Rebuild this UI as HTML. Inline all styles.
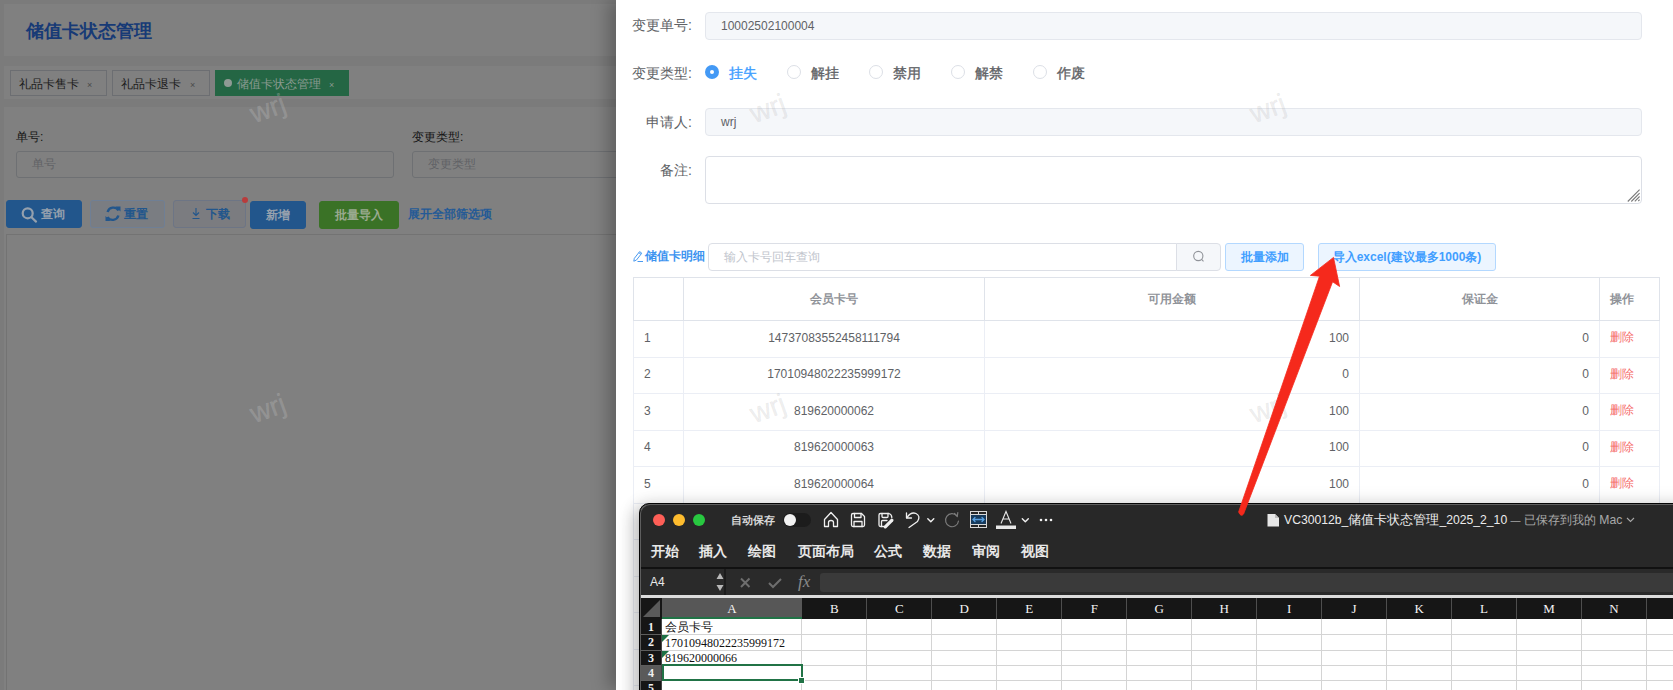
<!DOCTYPE html>
<html><head><meta charset="utf-8">
<style>
*{box-sizing:border-box;margin:0;padding:0}
html,body{width:1673px;height:690px;overflow:hidden}
body{position:relative;font-family:"Liberation Sans",sans-serif;background:#7b7b7b;color:#606266}
.abs{position:absolute}
/* left page */
#hdr{left:4px;top:4px;width:1200px;height:52px;background:#808080}
#hdr .t{left:22px;top:17px;font-size:18px;font-weight:bold;color:#173a76;white-space:nowrap;line-height:20px}
#tabbar{left:4px;top:66px;width:1200px;height:33px;background:#808080}
.tab{top:70px;height:26px;border:1px solid #6c6e72;background:#808080;font-size:12px;color:#1c1c1c;line-height:26px;padding-left:8px;white-space:nowrap}
.tab .x{position:absolute;top:1px;font-size:9px;color:#4a4a4a}
#content{left:4px;top:107px;width:1200px;height:600px;background:#808080}
.lbl{font-size:12px;color:#141414;white-space:nowrap;line-height:14px}
.inp{height:27px;border:1px solid #6e7073;border-radius:3px;background:#808080;font-size:12px;color:#606266;line-height:25px;padding-left:15px;white-space:nowrap}
.btn{height:28px;border-radius:3px;font-size:12px;font-weight:bold;line-height:26px;text-align:center;white-space:nowrap;border:1px solid}
#card{left:6px;top:234px;width:1200px;height:500px;border:1px solid #737373;background:#808080}
#overlay{left:0;top:0;width:1673px;height:690px;background:rgba(0,0,0,.5)}
/* drawer */
#drawer{left:616px;top:0;width:1057px;height:690px;background:#fff;box-shadow:-8px 0 16px rgba(0,0,0,.25)}
.dl{font-size:14px;color:#606266;text-align:right;white-space:nowrap;line-height:16px}
.dinp{height:28px;border:1px solid #e4e7ed;border-radius:4px;background:#f5f7fa;font-size:12px;color:#606266;line-height:26px;padding-left:15px}
.radio{width:14px;height:14px;border-radius:50%;border:1px solid #dcdfe6;background:#fff}
.rt{font-size:14px;color:#606266;font-weight:normal;-webkit-text-stroke-width:0.35px;line-height:16px;white-space:nowrap}
table.et{border-collapse:collapse;table-layout:fixed}
.et td,.et th{border:1px solid #ebeef5;font-size:12px;color:#606266;height:36.5px;padding:0 10px 2px;white-space:nowrap}
.et th{color:#909399;font-weight:bold;height:43px;border-color:#dfe3ea;padding:0 10px}
.wm{font-size:28px;font-weight:normal;-webkit-text-stroke:0.4px rgba(172,172,172,.18);color:rgba(172,172,172,.2);transform:rotate(-20deg);white-space:nowrap;line-height:30px;width:60px;text-align:center}
.tl{width:12px;height:12px;border-radius:50%}
.colh{top:599px;height:19px;font-family:"Liberation Serif",serif;font-size:13px;color:#f4f4f4;text-align:center;line-height:19px}
.rowh{left:640px;width:22px;font-family:"Liberation Serif",serif;font-weight:bold;font-size:12px;color:#f0f0f0;text-align:center;line-height:16px}
.cellt{left:665px;font-family:"Liberation Serif",serif;font-size:12px;color:#111;line-height:14px;white-space:nowrap}
.lt{font-size:12.2px}
</style></head><body>
<div id="hdr" class="abs"><div class="t abs">储值卡状态管理</div></div>
<div id="tabbar" class="abs"></div>
<div class="tab abs" style="left:10px;width:97px">礼品卡售卡<span class="x" style="left:76px">×</span></div>
<div class="tab abs" style="left:112px;width:98px">礼品卡退卡<span class="x" style="left:77px">×</span></div>
<div class="tab abs" style="left:215px;width:134px;background:#246644;border-color:#246644;color:#8a9a90;padding-left:21px"><span class="abs" style="left:8px;top:8px;width:8px;height:8px;border-radius:50%;background:#8f9a94"></span>储值卡状态管理<span class="x" style="left:113px;color:#8a9a90">×</span></div>
<div id="content" class="abs"></div>
<div class="lbl abs" style="left:16px;top:130px">单号:</div>
<div class="inp abs" style="left:16px;top:151px;width:378px">单号</div>
<div class="lbl abs" style="left:412px;top:130px">变更类型:</div>
<div class="inp abs" style="left:412px;top:151px;width:378px">变更类型</div>
<div class="btn abs" style="left:6px;top:200px;width:76px;background:#22568c;border-color:#22568c;color:#95a0ad;padding-left:17px">查询</div>
<div class="btn abs" style="left:90px;top:200px;width:75px;background:#7a7d82;border-color:#6f7f95;color:#22568c;padding-left:17px">重置</div>
<div class="btn abs" style="left:173px;top:200px;width:73px;background:#7b7c80;border-color:#6d7585;color:#22568c;padding-left:17px">下载</div>
<div class="abs" style="left:242px;top:197px;width:6px;height:6px;border-radius:50%;background:#b83c3c"></div>
<div class="btn abs" style="left:250px;top:201px;width:56px;background:#22568c;border-color:#22568c;color:#95a0ad">新增</div>
<div class="btn abs" style="left:319px;top:201px;width:80px;background:#3a7226;border-color:#3a7226;color:#9aaa90">批量导入</div>
<div class="abs" style="left:408px;top:207px;font-size:12px;font-weight:bold;color:#245a96;white-space:nowrap;line-height:14px">展开全部筛选项</div>
<svg class="abs" style="left:0;top:0" width="600" height="240">
<g fill="none" stroke="#95a0ad" stroke-width="2.2" stroke-linecap="round"><circle cx="27.7" cy="213.3" r="5"/><path d="M31.5 217.3 L36 221.6"/></g>
<g fill="none" stroke="#22568c" stroke-width="2.4"><path d="M107.6 212 A6 6 0 0 1 118.5 210.5"/><path d="M118.4 215.5 A6 6 0 0 1 107.5 217"/></g>
<path d="M115.5 206.5 L120.5 206.5 L120.5 211.5 Z M110.5 221 L105.5 221 L105.5 216 Z" fill="#22568c"/>
<path d="M196 208 V215 M193 212.5 L196 215.5 L199 212.5 M192.5 218.5 H199.5" fill="none" stroke="#22568c" stroke-width="1.1"/>
</svg>
<div id="card" class="abs"></div>
<div id="drawer" class="abs">
<div class="dl abs" style="left:16px;top:17px;width:60px">变更单号:</div>
<div class="dinp abs" style="left:89px;top:12px;width:937px">10002502100004</div>
<div class="dl abs" style="left:16px;top:65px;width:60px">变更类型:</div>
<div class="radio abs" style="left:89px;top:65px;border:none;background:#4399f5"><span class="abs" style="left:5px;top:5px;width:4px;height:4px;border-radius:50%;background:#fff"></span></div>
<div class="rt abs" style="left:113px;top:65px;color:#409eff">挂失</div>
<div class="radio abs" style="left:171px;top:65px"></div><div class="rt abs" style="left:195px;top:65px">解挂</div>
<div class="radio abs" style="left:253px;top:65px"></div><div class="rt abs" style="left:277px;top:65px">禁用</div>
<div class="radio abs" style="left:335px;top:65px"></div><div class="rt abs" style="left:359px;top:65px">解禁</div>
<div class="radio abs" style="left:417px;top:65px"></div><div class="rt abs" style="left:441px;top:65px">作废</div>
<div class="dl abs" style="left:16px;top:114px;width:60px">申请人:</div>
<div class="dinp abs" style="left:89px;top:108px;width:937px">wrj</div>
<div class="dl abs" style="left:16px;top:162px;width:60px">备注:</div>
<div class="abs" style="left:89px;top:156px;width:937px;height:48px;border:1px solid #dcdfe6;border-radius:4px;background:#fff"></div>
<svg class="abs" style="left:990px;top:185px" width="36" height="20"><path d="M21.8 16.5 L33.6 4.7 M25.3 16.5 L33.6 8.2 M28.8 16.3 L33.6 11.5 M32.3 16 L33.6 14.7" stroke="#7a7a7a" stroke-width="1.1"/></svg>
<div class="abs" style="left:29px;top:249px;font-size:12px;font-weight:bold;color:#3d94f0;white-space:nowrap;line-height:14px">储值卡明细</div>
<svg class="abs" style="left:16px;top:248px" width="14" height="16"><path d="M1.8 13.2 L2.3 10.4 L7.6 3.6 L9.8 5.2 L4.4 12.1 Z M6.8 4.7 L9 6.3" fill="none" stroke="#4a9af0" stroke-width="1"/><path d="M5.5 13.5 H11" stroke="#4a9af0" stroke-width="1"/></svg>

<div class="abs" style="left:92px;top:243px;width:469px;height:28px;border:1px solid #dcdfe6;border-radius:4px 0 0 4px;background:#fff;font-size:12px;color:#c0c4cc;line-height:26px;padding-left:15px;white-space:nowrap">输入卡号回车查询</div>
<div class="abs" style="left:560px;top:243px;width:45px;height:28px;border:1px solid #dcdfe6;border-radius:0 4px 4px 0;background:#f5f7fa"></div>
<div class="btn abs" style="left:609px;top:243px;width:79px;height:28px;background:#ecf5ff;border-color:#b3d8ff;color:#409eff">批量添加</div>
<div class="btn abs" style="left:702px;top:243px;width:178px;height:28px;background:#ecf5ff;border-color:#b3d8ff;color:#409eff">导入excel(建议最多1000条)</div>
<svg class="abs" style="left:575px;top:250px" width="16" height="16"><circle cx="7.3" cy="6" r="4.6" fill="none" stroke="#909399" stroke-width="1.1"/><path d="M10.6 9.4 L12.5 11.3" stroke="#909399" stroke-width="1.1"/></svg>
<table class="et abs" style="left:17px;top:277px;width:1026px">
<colgroup><col style="width:50px"><col style="width:301px"><col style="width:375px"><col style="width:240px"><col style="width:60px"></colgroup>
<tr><th></th><th>会员卡号</th><th>可用金额</th><th>保证金</th><th style="text-align:left">操作</th></tr>
<tr><td>1</td><td style="text-align:center">14737083552458111794</td><td style="text-align:right">100</td><td style="text-align:right">0</td><td style="color:#f56c6c">删除</td></tr>
<tr><td>2</td><td style="text-align:center">17010948022235999172</td><td style="text-align:right">0</td><td style="text-align:right">0</td><td style="color:#f56c6c">删除</td></tr>
<tr><td>3</td><td style="text-align:center">819620000062</td><td style="text-align:right">100</td><td style="text-align:right">0</td><td style="color:#f56c6c">删除</td></tr>
<tr><td>4</td><td style="text-align:center">819620000063</td><td style="text-align:right">100</td><td style="text-align:right">0</td><td style="color:#f56c6c">删除</td></tr>
<tr><td>5</td><td style="text-align:center">819620000064</td><td style="text-align:right">100</td><td style="text-align:right">0</td><td style="color:#f56c6c">删除</td></tr>
<tr><td>6</td><td></td><td></td><td></td><td></td></tr>
<tr><td>7</td><td></td><td></td><td></td><td></td></tr><tr><td>8</td><td></td><td></td><td></td><td></td></tr><tr><td>9</td><td></td><td></td><td></td><td></td></tr><tr><td>10</td><td></td><td></td><td></td><td></td></tr><tr><td>11</td><td></td><td></td><td></td><td></td></tr>
</table>
</div>
<div class="abs wm" style="left:238px;top:94px;color:rgba(200,200,200,.26);-webkit-text-stroke:0.4px rgba(200,200,200,.24)">wrj</div><div class="abs wm" style="left:738px;top:94px">wrj</div><div class="abs wm" style="left:1238px;top:94px">wrj</div><div class="abs wm" style="left:238px;top:394px;color:rgba(200,200,200,.26);-webkit-text-stroke:0.4px rgba(200,200,200,.24)">wrj</div><div class="abs wm" style="left:738px;top:394px">wrj</div><div class="abs wm" style="left:1238px;top:394px">wrj</div><div id="xshadow" class="abs" style="left:639px;top:503px;width:1100px;height:300px;border-radius:10px;box-shadow:-4px 6px 16px 2px rgba(0,0,0,.22), 0 0 20px 1px rgba(0,0,0,.08)"></div>
<div id="excel" class="abs" style="left:639px;top:503px;width:1100px;height:300px;border-radius:10px 0 0 0;background:#282828;border:1px solid #050505;box-shadow:inset 1px 1px 0 #5e5e5e;overflow:hidden"></div>
<div class="abs tl" style="left:653px;top:514px;background:#fe5f57"></div>
<div class="abs tl" style="left:673px;top:514px;background:#febc2e"></div>
<div class="abs tl" style="left:693px;top:514px;background:#28c840"></div>
<div class="abs" style="left:731px;top:513px;font-size:11px;font-weight:bold;color:#d8d8d8;line-height:14px;white-space:nowrap">自动保存</div>
<div class="abs" style="left:783px;top:513px;width:28px;height:14px;border-radius:7px;background:#1c1c1c"></div>
<div class="abs" style="left:784px;top:514px;width:12px;height:12px;border-radius:6px;background:#f2f2f2"></div>
<div class="abs" style="left:1284px;top:512px;font-size:13px;color:#ececec;line-height:16px;white-space:nowrap"><span class="lt">VC30012b_</span>储值卡状态管理<span class="lt">_2025_2_10</span><span class="lt"> </span><span style="color:#a8a8a8"><span style="font-size:10px">—</span><span class="lt"> </span><span style="font-size:12px">已保存到我的</span><span class="lt"> Mac</span></span></div>
<div class="abs" style="top:543.5px;left:650.5px;font-size:13.6px;font-weight:bold;color:#e8e8e8;line-height:16px;white-space:nowrap;word-spacing:0">
<span class="abs" style="left:0">开始</span><span class="abs" style="left:48px">插入</span><span class="abs" style="left:97px">绘图</span><span class="abs" style="left:147px">页面布局</span><span class="abs" style="left:223px">公式</span><span class="abs" style="left:272px">数据</span><span class="abs" style="left:321px">审阅</span><span class="abs" style="left:370px">视图</span></div>
<div class="abs" style="left:640px;top:567px;width:1040px;height:2px;background:#111"></div>
<div class="abs" style="left:640px;top:569px;width:1040px;height:26px;background:#2a2a2a"></div>
<div class="abs" style="left:724px;top:569px;width:2px;height:26px;background:#1c1c1c"></div>
<div class="abs" style="left:650px;top:575px;font-size:12px;color:#e8e8e8;line-height:14px">A4</div>
<div class="abs" style="left:820px;top:573px;width:860px;height:19px;background:#3a3a3a;border-radius:3px 0 0 3px"></div>
<div class="abs" style="left:640px;top:595px;width:1040px;height:3px;background:#dcdcdc"></div>
<div class="abs" style="left:640px;top:598px;width:1040px;height:21px;background:#161616"></div>
<div class="abs" style="left:662px;top:598px;width:140px;height:21px;background:#575757;border-bottom:2px solid #217346"></div>
<div class="abs colh" style="left:662px;width:140px">A</div>

<div class="abs" style="left:662px;top:619px;width:1020px;height:80px;background:#fff"></div><div class="abs" style="left:801px;top:619px;width:1px;height:80px;background:#d4d4d4"></div><div class="abs" style="left:866px;top:619px;width:1px;height:80px;background:#d4d4d4"></div><div class="abs" style="left:866px;top:598px;width:1px;height:21px;background:#4e4e4e"></div><div class="abs" style="left:931px;top:619px;width:1px;height:80px;background:#d4d4d4"></div><div class="abs" style="left:931px;top:598px;width:1px;height:21px;background:#4e4e4e"></div><div class="abs" style="left:996px;top:619px;width:1px;height:80px;background:#d4d4d4"></div><div class="abs" style="left:996px;top:598px;width:1px;height:21px;background:#4e4e4e"></div><div class="abs" style="left:1061px;top:619px;width:1px;height:80px;background:#d4d4d4"></div><div class="abs" style="left:1061px;top:598px;width:1px;height:21px;background:#4e4e4e"></div><div class="abs" style="left:1126px;top:619px;width:1px;height:80px;background:#d4d4d4"></div><div class="abs" style="left:1126px;top:598px;width:1px;height:21px;background:#4e4e4e"></div><div class="abs" style="left:1191px;top:619px;width:1px;height:80px;background:#d4d4d4"></div><div class="abs" style="left:1191px;top:598px;width:1px;height:21px;background:#4e4e4e"></div><div class="abs" style="left:1256px;top:619px;width:1px;height:80px;background:#d4d4d4"></div><div class="abs" style="left:1256px;top:598px;width:1px;height:21px;background:#4e4e4e"></div><div class="abs" style="left:1321px;top:619px;width:1px;height:80px;background:#d4d4d4"></div><div class="abs" style="left:1321px;top:598px;width:1px;height:21px;background:#4e4e4e"></div><div class="abs" style="left:1386px;top:619px;width:1px;height:80px;background:#d4d4d4"></div><div class="abs" style="left:1386px;top:598px;width:1px;height:21px;background:#4e4e4e"></div><div class="abs" style="left:1451px;top:619px;width:1px;height:80px;background:#d4d4d4"></div><div class="abs" style="left:1451px;top:598px;width:1px;height:21px;background:#4e4e4e"></div><div class="abs" style="left:1516px;top:619px;width:1px;height:80px;background:#d4d4d4"></div><div class="abs" style="left:1516px;top:598px;width:1px;height:21px;background:#4e4e4e"></div><div class="abs" style="left:1581px;top:619px;width:1px;height:80px;background:#d4d4d4"></div><div class="abs" style="left:1581px;top:598px;width:1px;height:21px;background:#4e4e4e"></div><div class="abs" style="left:1646px;top:619px;width:1px;height:80px;background:#d4d4d4"></div><div class="abs" style="left:1646px;top:598px;width:1px;height:21px;background:#4e4e4e"></div><div class="abs" style="left:1711px;top:619px;width:1px;height:80px;background:#d4d4d4"></div><div class="abs" style="left:1711px;top:598px;width:1px;height:21px;background:#4e4e4e"></div><div class="abs colh" style="left:801.90px;width:64.97px">B</div><div class="abs colh" style="left:866.87px;width:64.97px">C</div><div class="abs colh" style="left:931.84px;width:64.97px">D</div><div class="abs colh" style="left:996.81px;width:64.97px">E</div><div class="abs colh" style="left:1061.78px;width:64.97px">F</div><div class="abs colh" style="left:1126.75px;width:64.97px">G</div><div class="abs colh" style="left:1191.72px;width:64.97px">H</div><div class="abs colh" style="left:1256.69px;width:64.97px">I</div><div class="abs colh" style="left:1321.66px;width:64.97px">J</div><div class="abs colh" style="left:1386.63px;width:64.97px">K</div><div class="abs colh" style="left:1451.60px;width:64.97px">L</div><div class="abs colh" style="left:1516.57px;width:64.97px">M</div><div class="abs colh" style="left:1581.54px;width:64.97px">N</div><div class="abs colh" style="left:1646.51px;width:64.97px">O</div>
<div class="abs rowh" style="top:619px;height:15px;background:#161616">1</div><div class="abs rowh" style="top:634px;height:16px;background:#161616">2</div><div class="abs rowh" style="top:650px;height:15px;background:#161616">3</div><div class="abs rowh" style="top:665px;height:15px;background:#5a5a5a">4</div><div class="abs rowh" style="top:680px;height:15px;background:#161616">5</div><div class="abs" style="left:662px;top:634px;width:1020px;height:1px;background:#d4d4d4"></div><div class="abs" style="left:640px;top:634px;width:22px;height:1px;background:#5e5e5e"></div><div class="abs" style="left:662px;top:650px;width:1020px;height:1px;background:#d4d4d4"></div><div class="abs" style="left:640px;top:650px;width:22px;height:1px;background:#5e5e5e"></div><div class="abs" style="left:662px;top:665px;width:1020px;height:1px;background:#d4d4d4"></div><div class="abs" style="left:640px;top:665px;width:22px;height:1px;background:#5e5e5e"></div><div class="abs" style="left:662px;top:680px;width:1020px;height:1px;background:#d4d4d4"></div><div class="abs" style="left:640px;top:680px;width:22px;height:1px;background:#5e5e5e"></div><div class="abs" style="left:661px;top:619px;width:1px;height:80px;background:#474747"></div>
<div class="abs" style="left:665px;top:620px;font-family:'Liberation Serif',serif;font-size:12px;color:#111;line-height:14px;white-space:nowrap">会员卡号</div>
<div class="abs cellt" style="top:635.5px">17010948022235999172</div>
<div class="abs cellt" style="top:651px">819620000066</div>
<div class="abs" style="left:662px;top:635px;width:0;height:0;border-top:7px solid #1e7145;border-right:7px solid transparent"></div>
<div class="abs" style="left:662px;top:651px;width:0;height:0;border-top:7px solid #1e7145;border-right:7px solid transparent"></div>
<div class="abs" style="left:662px;top:663.5px;width:141px;height:17.5px;border:2px solid #217346"></div>
<div class="abs" style="left:797.5px;top:676.5px;width:7px;height:7px;background:#217346;border:1px solid #fff"></div>
<div class="abs" style="left:640px;top:514px;width:1px;height:176px;background:#5e5e5e"></div>
<svg class="abs" style="left:0;top:0" width="1673" height="690" viewBox="0 0 1673 690">
<g fill="none" stroke="#f0f0f0" stroke-width="1.3" stroke-linejoin="round" stroke-linecap="round">
<!-- home -->
<path d="M824.5 519.5 L831 512.5 L837.5 519.5 L837.5 526.5 L833.5 526.5 L833.5 522.5 Q833.5 520.5 831 520.5 Q828.5 520.5 828.5 522.5 L828.5 526.5 L824.5 526.5 Z"/>
<!-- save -->
<path d="M853 513.5 L861.5 513.5 L864.5 516.5 L864.5 525 Q864.5 526.5 863 526.5 L853 526.5 Q851.5 526.5 851.5 525 L851.5 515 Q851.5 513.5 853 513.5 Z"/>
<path d="M854.5 513.5 L854.5 517.5 L861 517.5 L861 513.5"/>
<path d="M854 526.5 L854 521.5 L862 521.5 L862 526.5"/>
<!-- save edit -->
<path d="M883.5 526.5 L880.5 526.5 Q879 526.5 879 525 L879 515 Q879 513.5 880.5 513.5 L889 513.5 Q891.8 514.5 891.8 517.5"/>
<path d="M882 513.5 L882 516.5 Q882 517.5 883 517.5 L887 517.5 Q888 517.5 888 516.5 L888 513.5"/>
<path d="M881.5 526.5 L881.5 521.5 Q881.5 520.5 882.5 520.5 L887 520.5"/>
<!-- undo -->
<path d="M906.5 513 L906.5 518 L911.5 518"/>
<path d="M906.8 517.8 Q911 511.5 916 513.5 Q921 516 917.5 521.5 L909 527.5"/>
<path d="M927.8 518.8 L930.8 521.8 L933.8 518.8" stroke-width="1.4"/>
<path d="M1022.3 518.8 L1025.3 521.8 L1028.3 518.8" stroke-width="1.4"/>
</g>
<path d="M885.3 526.8 L891.8 520.3" stroke="#f0f0f0" stroke-width="3.3" stroke-linecap="round"/>
<!-- redo -->
<g fill="none" stroke="#7a7a7a" stroke-width="1.2" stroke-linecap="round">
<path d="M957 516 A6.5 6.5 0 1 0 958.5 521"/>
<path d="M954.5 513.5 L957.3 516.3 L957.8 512.5"/>
</g>
<!-- fit table icon -->
<rect x="970.5" y="511.5" width="16" height="16" fill="#262626" stroke="#d8d8d8" stroke-width="1"/><rect x="971" y="515" width="15" height="9" fill="#163a5c"/>
<path d="M970.5 514.5 H986.5 M970.5 524.5 H986.5 M978.5 511.5 V514.5 M978.5 524.5 V527.5" stroke="#d8d8d8" stroke-width="1" fill="none"/>
<path d="M973 519.5 H984 M975 517.5 L973 519.5 L975 521.5 M982 517.5 L984 519.5 L982 521.5" stroke="#5aa0e0" stroke-width="1.3" fill="none" stroke-linecap="round"/>
<!-- A color -->
<path d="M1001 523.5 L1006 511.5 L1011 523.5 M1002.8 519 H1009.2" stroke="#e8e8e8" stroke-width="1.1" fill="none"/>
<rect x="996" y="525.5" width="20" height="3.5" fill="#e8e8e8"/>
<!-- more -->
<circle cx="1041" cy="520" r="1.3" fill="#f0f0f0"/><circle cx="1046" cy="520" r="1.3" fill="#f0f0f0"/><circle cx="1051" cy="520" r="1.3" fill="#f0f0f0"/>
<!-- file icon -->
<path d="M1267.5 514 H1275 L1279 518 V526.5 H1267.5 Z" fill="#e6e6e6"/>
<path d="M1275 514 V518 H1279" fill="#bdbdbd"/>
<path d="M1627 518 L1630.5 521.5 L1634 518" stroke="#a8a8a8" stroke-width="1.1" fill="none"/>
<!-- spin arrows -->
<path d="M716.5 579 L720 573 L723.5 579 Z M716.5 585 L720 591 L723.5 585 Z" fill="#b8b8b8"/>
<!-- x check -->
<path d="M741 578.5 L749.5 587 M749.5 578.5 L741 587" stroke="#6e6e6e" stroke-width="2"/>
<path d="M769 583 L773 587 L781 579" stroke="#6e6e6e" stroke-width="2" fill="none"/>
<!-- corner triangle -->
<path d="M660 600 L660 617 L643 617 Z" fill="#5a5a5a"/>
</svg>
<div class="abs" style="left:798px;top:572px;font-family:'Liberation Serif',serif;font-style:italic;font-size:17px;color:#8a8a8a;line-height:20px;white-space:nowrap">fx</div>
<svg class="abs" style="left:0;top:0" width="1673" height="690" viewBox="0 0 1673 690">
<path d="M1238.6 512 L1319.5 276.2 L1310.4 275.4 L1333.5 257.4 L1339.6 286.5 L1332.6 281.8 L1243.6 514 Q1241 517.5 1238.6 512 Z" fill="#f5291c" stroke="#f5291c" stroke-width="0.8" stroke-linejoin="round"/>
</svg>
</body></html>
